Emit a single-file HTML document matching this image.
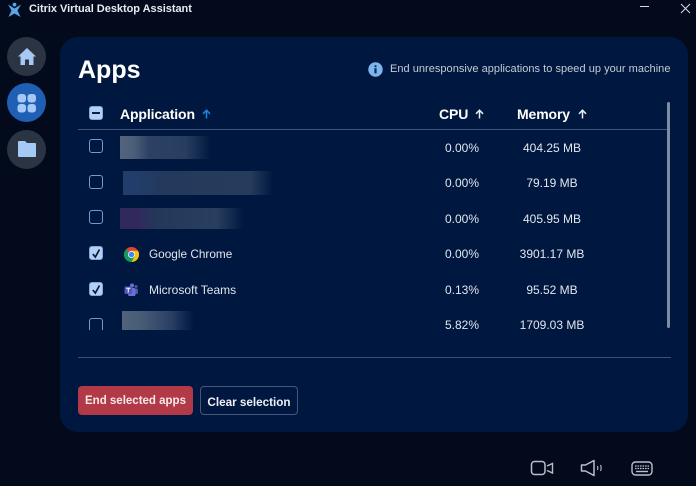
<!DOCTYPE html>
<html><head><meta charset="utf-8">
<style>
html,body{margin:0;padding:0}
body{width:696px;height:486px;overflow:hidden;position:relative;background:#020a1b;font-family:"Liberation Sans",sans-serif;color:#fff}
#w{position:absolute;left:0;top:0;width:696px;height:486px;filter:blur(.35px)}
.a{position:absolute;white-space:nowrap}
.panel{left:60px;top:37px;width:628px;height:395px;background:#00183f;border-radius:18px}
.nav{left:7px;width:39px;height:39px;border-radius:50%;background:#2a3443}
.cb{left:89px;width:12px;height:12px;border:1.5px solid #6d9bd6;border-radius:3px;box-sizing:content-box}
.cb.on{background:#b5d0f5;border-color:#7ea8e0}
.cell{font-size:12px;color:#dfe4ec;line-height:14px}
.num{font-size:12px;color:#e2e6ee;line-height:14px;text-align:center}
.h{font-size:14px;letter-spacing:-.12px;font-weight:700;line-height:16px;color:#fff}
.blur{overflow:hidden}
</style></head><body><div id="w">

<svg class="a" style="left:7px;top:2px" width="15" height="15" viewBox="0 0 15 15"><circle cx="7.5" cy="2.6" r="1.9" fill="#5aa5e8"/><path d="M1 2.5L7.5 6.5L14 2.5L10.5 8.5L13.5 15L7.5 11.5L1.5 15L4.5 8.5Z" fill="#5aa5e8"/></svg>
<div class="a" style="left:29px;top:2px;font-size:11px;font-weight:700;line-height:14px;color:#e8ecf2;letter-spacing:-.03px">Citrix Virtual Desktop Assistant</div>
<div class="a" style="left:640px;top:6px;width:9px;height:1px;background:#d8dde5"></div>
<svg class="a" style="left:680px;top:3px" width="11" height="11" viewBox="0 0 11 11"><path d="M1 1L10 10M10 1L1 10" stroke="#d8dde5" stroke-width="1" fill="none"/></svg>

<div class="a nav" style="top:37px"></div>
<svg class="a" style="left:17px;top:47px" width="20" height="19" viewBox="0 0 20 19"><path d="M10 1L19 9.5L16.5 9.5V18H12V12.5H8V18H3.5V9.5H1Z" fill="#a5c8f5"/></svg>
<div class="a nav" style="top:83px;background:#1f5fb4"></div>
<svg class="a" style="left:17px;top:93px" width="20" height="20" viewBox="0 0 20 20"><g fill="#a5c8f5"><rect x="0.5" y="1" width="8.5" height="8.5" rx="3"/><rect x="10.5" y="1" width="8.5" height="8.5" rx="3"/><rect x="0.5" y="11" width="8.5" height="8.5" rx="3"/><rect x="10.5" y="11" width="8.5" height="8.5" rx="3"/></g></svg>
<div class="a nav" style="top:130px"></div>
<svg class="a" style="left:17px;top:140px" width="20" height="18" viewBox="0 0 20 18"><path d="M1 2Q1 1 2 1H8L10 3H18Q19 3 19 4V16.5Q19 17 18 17H2Q1 17 1 16Z" fill="#a5c8f5"/></svg>

<div class="a panel"></div>
<div class="a" style="left:78px;top:54px;font-size:25px;font-weight:700;line-height:32px;color:#fff">Apps</div>

<svg class="a" style="left:368px;top:62px" width="15" height="15" viewBox="0 0 15 15"><circle cx="7.5" cy="7.5" r="7.2" fill="#7db5ee"/><circle cx="7.5" cy="4.2" r="1.1" fill="#0c2a55"/><rect x="6.4" y="6.2" width="2.2" height="5.2" fill="#0c2a55"/></svg>
<div class="a" style="left:390px;top:62px;font-size:11px;line-height:14px;color:#c3cbd8;letter-spacing:.03px">End unresponsive applications to speed up your machine</div>

<div class="a cb on" style="top:106px;border-radius:3px"></div>
<div class="a" style="left:92px;top:112px;width:8px;height:2px;background:#10203c"></div>
<div class="a h" style="left:120px;top:106px">Application</div>
<svg class="a" style="left:202px;top:109px" width="9" height="10" viewBox="0 0 9 10"><path d="M4.5 9.5V1.5M1 4.8L4.5 1.2L8 4.8" stroke="#1e82e0" stroke-width="1.5" fill="none"/></svg>
<div class="a h" style="left:439px;top:106px">CPU</div>
<svg class="a" style="left:475px;top:109px" width="9" height="10" viewBox="0 0 9 10"><path d="M4.5 9.5V1.5M1 4.8L4.5 1.2L8 4.8" stroke="#e8ecf2" stroke-width="1.5" fill="none"/></svg>
<div class="a h" style="left:517px;top:106px">Memory</div>
<svg class="a" style="left:578px;top:109px" width="9" height="10" viewBox="0 0 9 10"><path d="M4.5 9.5V1.5M1 4.8L4.5 1.2L8 4.8" stroke="#e8ecf2" stroke-width="1.5" fill="none"/></svg>
<div class="a" style="left:78px;top:129px;width:589px;height:1px;background:#41567a"></div>
<div class="a" style="left:667px;top:102px;width:3px;height:226px;background:#7d8ba3;border-radius:2px"></div>

<div class="a cb" style="top:139px"></div>
<div class="a blur" style="left:120px;top:136px;width:91px;height:23px;background:linear-gradient(90deg,#52647b 0%,#4c5f79 15%,#2c4164 32%,#283e60 72%,#00183f 100%)"></div>
<div class="a num" style="left:432px;top:141px;width:60px">0.00%</div>
<div class="a num" style="left:512px;top:141px;width:80px">404.25 MB</div>

<div class="a cb" style="top:175px"></div>
<div class="a blur" style="left:123px;top:171px;width:150px;height:24px;background:linear-gradient(90deg,#223d6b 0%,#223d6b 10%,#233a5c 25%,#263c5c 85%,#00183f 100%)"></div>
<div class="a num" style="left:432px;top:176px;width:60px">0.00%</div>
<div class="a num" style="left:512px;top:176px;width:80px">79.19 MB</div>

<div class="a cb" style="top:210px"></div>
<div class="a blur" style="left:120px;top:208px;width:124px;height:21px;background:linear-gradient(90deg,#31295c 0%,#31295c 14%,#23385a 30%,#293f60 78%,#00183f 100%)"></div>
<div class="a num" style="left:432px;top:212px;width:60px">0.00%</div>
<div class="a num" style="left:512px;top:212px;width:80px">405.95 MB</div>

<div class="a cb on" style="top:246px"></div>
<svg class="a" style="left:89px;top:246px" width="15" height="15" viewBox="0 0 15 15"><path d="M3.8 8L6.3 11L10.5 3.5" stroke="#0b1a30" stroke-width="1.7" fill="none"/></svg>
<svg class="a" style="left:124px;top:247px" width="15" height="15" viewBox="0 0 24 24"><circle cx="12" cy="12" r="12" fill="#db4437"/><path d="M12 12L1.6 18A12 12 0 0 1 3 4L12 12Z" fill="#0f9d58"/><path d="M12 6H22.4A12 12 0 0 1 12 24L12 12Z" fill="#f4c20d"/><path d="M12 12L1.6 18A12 12 0 0 0 12 24L17.2 15Z" fill="#0f9d58"/><circle cx="12" cy="12" r="5.6" fill="#fff"/><circle cx="12" cy="12" r="4.4" fill="#4285f4"/></svg>
<div class="a cell" style="left:149px;top:247px;font-size:11.8px">Google Chrome</div>
<div class="a num" style="left:432px;top:247px;width:60px">0.00%</div>
<div class="a num" style="left:512px;top:247px;width:80px">3901.17 MB</div>

<div class="a cb on" style="top:282px"></div>
<svg class="a" style="left:89px;top:282px" width="15" height="15" viewBox="0 0 15 15"><path d="M3.8 8L6.3 11L10.5 3.5" stroke="#0b1a30" stroke-width="1.7" fill="none"/></svg>
<svg class="a" style="left:124px;top:283px" width="14" height="14" viewBox="0 0 14 14"><circle cx="8" cy="2.5" r="2" fill="#6a6fd0"/><circle cx="12" cy="3.5" r="1.5" fill="#4f54b0"/><rect x="9" y="5.5" width="5" height="5.5" rx="1.5" fill="#4f54b0"/><rect x="4" y="5" width="7.5" height="8" rx="1.5" fill="#6a6fd0"/><rect x="0.5" y="3.5" width="7.5" height="7.5" rx="1" fill="#5055b8"/><path d="M2.2 5.3H6.3M4.25 5.3V9.5" stroke="#fff" stroke-width="1"/></svg>
<div class="a cell" style="left:149px;top:283px">Microsoft Teams</div>
<div class="a num" style="left:432px;top:283px;width:60px">0.13%</div>
<div class="a num" style="left:512px;top:283px;width:80px">95.52 MB</div>

<div class="a" style="left:60px;top:317px;width:607px;height:13px;overflow:hidden">
<div class="a cb" style="left:29px;top:1px;height:20px"></div>
<div class="a num" style="left:372px;top:1px;width:60px">5.82%</div>
<div class="a num" style="left:452px;top:1px;width:80px">1709.03 MB</div>
</div>
<div class="a blur" style="left:122px;top:311px;width:72px;height:19px;background:linear-gradient(90deg,#52647b 0%,#465a75 30%,#2a4064 68%,#00183f 100%)"></div>

<div class="a" style="left:78px;top:357px;width:593px;height:1px;background:#3d5070"></div>

<div class="a" style="left:78px;top:386px;width:115px;height:29px;background:#b23a48;border-radius:4px;text-align:center;font-size:11.5px;font-weight:700;line-height:30px;color:#f5e9ea">End selected apps</div>
<div class="a" style="left:200px;top:386px;width:98px;height:29px;box-sizing:border-box;border:1px solid #46587a;border-radius:4px;text-align:center;font-size:11.7px;font-weight:700;line-height:29px;color:#eef1f5"><span style="position:relative;top:1px">Clear selection</span></div>

<svg class="a" style="left:530px;top:460px" width="25" height="16" viewBox="0 0 25 16"><rect x="1.5" y="1.5" width="13.5" height="13" rx="3" fill="none" stroke="#b8bfcb" stroke-width="1.5"/><path d="M17 6L22.5 3.5V13L17 10.5" fill="none" stroke="#b8bfcb" stroke-width="1.4"/></svg>
<svg class="a" style="left:580px;top:459px" width="24" height="18" viewBox="0 0 24 18"><path d="M1.5 6H5.5L14 1.5V16.5L5.5 12H1.5Z" fill="none" stroke="#b8bfcb" stroke-width="1.5" stroke-linejoin="round"/><path d="M17.5 7Q18.3 9 17.5 11M20.5 6Q21.8 9 20.5 12" fill="none" stroke="#b8bfcb" stroke-width="1.1"/></svg>
<svg class="a" style="left:631px;top:461px" width="22" height="15" viewBox="0 0 22 15"><rect x="1" y="1" width="20" height="13" rx="3.5" fill="none" stroke="#b8bfcb" stroke-width="1.4"/><path d="M4 5H18M4 7.5H18" stroke="#b8bfcb" stroke-width="1.3" stroke-dasharray="1.6 .9"/><path d="M5 10.5H17" stroke="#b8bfcb" stroke-width="1.4"/></svg>

</div></body></html>
